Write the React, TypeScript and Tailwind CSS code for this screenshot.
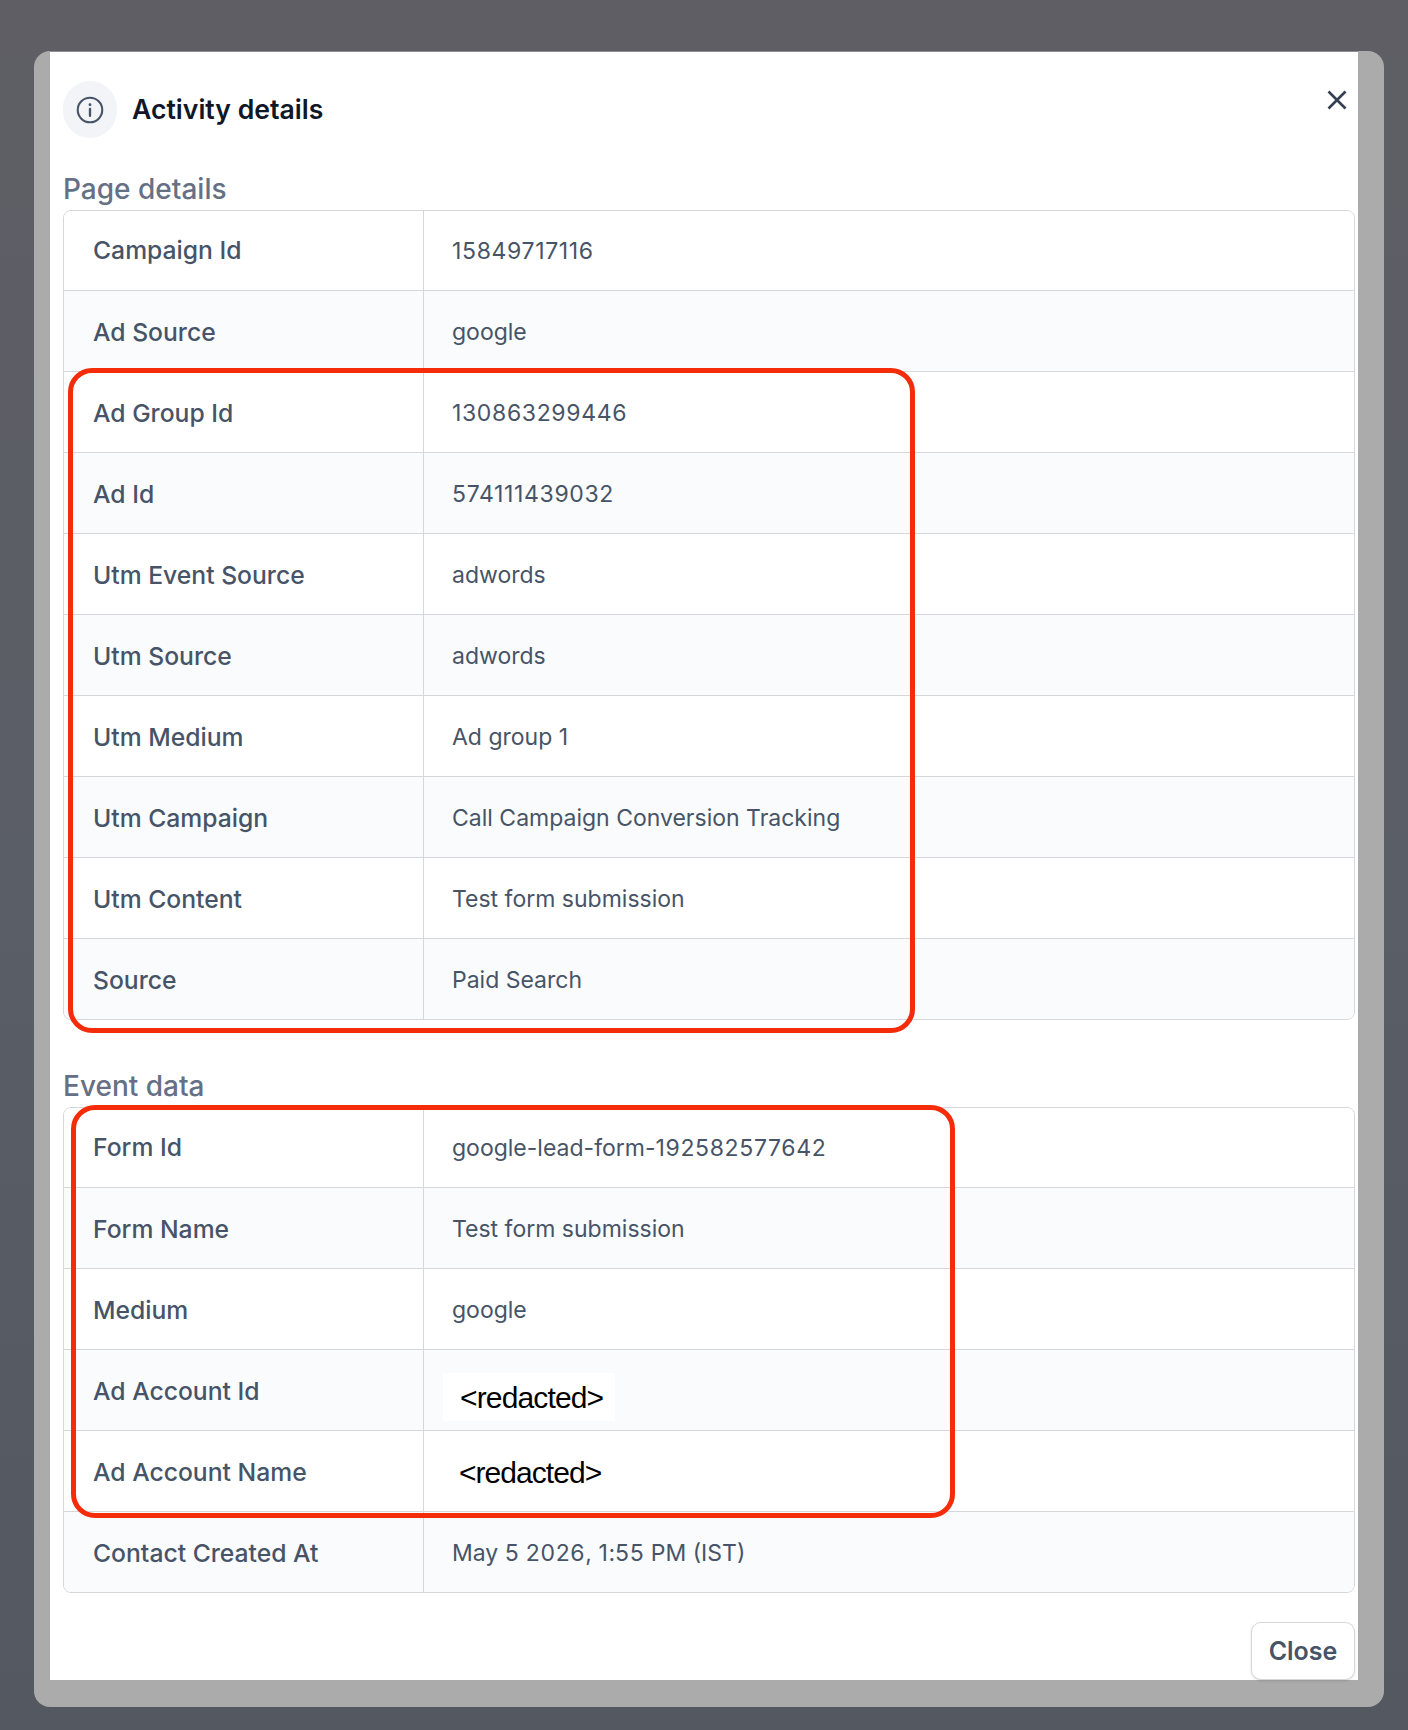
import React from "react";

type Row = { label: string; value?: string; redacted?: "patch" | "plain" };

const pageRows: Row[] = [
  { label: "Campaign Id", value: "15849717116" },
  { label: "Ad Source", value: "google" },
  { label: "Ad Group Id", value: "130863299446" },
  { label: "Ad Id", value: "574111439032" },
  { label: "Utm Event Source", value: "adwords" },
  { label: "Utm Source", value: "adwords" },
  { label: "Utm Medium", value: "Ad group 1" },
  { label: "Utm Campaign", value: "Call Campaign Conversion Tracking" },
  { label: "Utm Content", value: "Test form submission" },
  { label: "Source", value: "Paid Search" },
];

const eventRows: Row[] = [
  { label: "Form Id", value: "google-lead-form-192582577642" },
  { label: "Form Name", value: "Test form submission" },
  { label: "Medium", value: "google" },
  { label: "Ad Account Id", redacted: "patch" },
  { label: "Ad Account Name", redacted: "plain" },
  { label: "Contact Created At", value: "May 5 2026, 1:55 PM (IST)" },
];

function Value({ text }: { text: string }) {
  return (
    <span className="whitespace-pre">
      {text.split(/(\d+)/).map((part, i) =>
        /^\d+$/.test(part) ? (
          <span key={i} className="tracking-[0.65px]">
            {part}
          </span>
        ) : (
          <span key={i}>{part}</span>
        ),
      )}
    </span>
  );
}

function Table({ rows }: { rows: Row[] }) {
  return (
    <div className="rounded-[8px] border border-[#d5d7da] overflow-hidden">
      {rows.map((r, i) => (
        <div
          key={r.label}
          className={`grid grid-cols-[360px_1fr] ${i ? "h-[81px] border-t border-[#d5d7da]" : "h-[79px]"} ${i % 2 ? "bg-[#f9fbfc]" : "bg-white"}`}
        >
          <div className={`flex items-center border-r border-[#d5d7da] pl-[29px] text-[24.7px] font-medium text-[#475467] ${i ? "pt-[3px]" : "pt-[1px]"}`}>
            {r.label}
          </div>
          <div className={`flex items-center pl-[28px] text-[23px] font-normal text-[#475467] ${i ? "pt-[3px]" : "pt-[1px]"}`}>
            {r.value && <Value text={r.value} />}
            {r.redacted === "patch" && (
              <div className="ml-[-9px] mt-[11px] flex h-[48px] w-[172px] items-center bg-white pl-[17px] font-['Liberation_Sans',sans-serif] text-[30px] tracking-[-0.85px] text-black">
                {"<redacted>"}
              </div>
            )}
            {r.redacted === "plain" && (
              <div className="ml-[7px] mt-[-1px] font-['Liberation_Sans',sans-serif] text-[30px] tracking-[-0.95px] text-black">
                {"<redacted>"}
              </div>
            )}
          </div>
        </div>
      ))}
    </div>
  );
}

export default function App() {
  return (
    <div className="relative h-[1730px] w-full overflow-hidden bg-gradient-to-b from-[#5f5e65] via-[#5a5e66] to-[#535861] pl-[34px] pt-[52px] font-['Inter',sans-serif]">
      <div className="h-[1656px] w-[1350px] rounded-[16px] bg-[#ababab]">
        <div className="relative ml-[16px] -mt-px h-[1629px] w-[1308px] border-t border-[#8b8c93] bg-white pl-[13px] pr-[3px] pt-[29px]">
          <div className="flex items-center">
            <div className="flex h-[57px] w-[54px] items-center justify-center rounded-full bg-[#f2f4f7]">
              <svg width="28" height="28" viewBox="0 0 24 24" fill="none" stroke="#475467" strokeWidth="1.8" strokeLinecap="round">
                <circle cx="12" cy="12" r="10.5" />
                <path d="M12 11v6" strokeWidth="2" />
                <path d="M12 7.5h.01" strokeWidth="2.4" />
              </svg>
            </div>
            <h2 className="ml-[15px] text-[26.6px] font-semibold text-[#101828]">Activity details</h2>
          </div>
          <button className="absolute right-[11px] top-[38px] text-[#344054]" aria-label="Close">
            <svg className="block" width="20" height="20" viewBox="0 0 20 20" fill="none" stroke="currentColor" strokeWidth="2.6">
              <path d="M1.5 1.5l17 17M18.5 1.5l-17 17" />
            </svg>
          </button>

          <h3 className="mt-[31px] h-[41px] text-[28px] font-medium leading-[41px] text-[#667085]">Page details</h3>
          <Table rows={pageRows} />

          <h3 className="mt-[46px] h-[41px] text-[28px] font-medium leading-[40px] text-[#667085]">Event data</h3>
          <Table rows={eventRows} />

          <div className="mt-[29px] flex justify-end">
            <button className="h-[58px] w-[104px] rounded-[10px] border border-[#d5d7da] bg-white pt-[2px] text-[25px] font-semibold text-[#475467] shadow-sm">
              Close
            </button>
          </div>

          <div className="pointer-events-none absolute left-[18px] top-[316px] h-[665px] w-[847px] rounded-[24px] border-[5px] border-[#f42c0a]" />
          <div className="pointer-events-none absolute left-[21px] top-[1053px] h-[413px] w-[884px] rounded-[24px] border-[5px] border-[#f42c0a]" />
        </div>
      </div>
    </div>
  );
}
